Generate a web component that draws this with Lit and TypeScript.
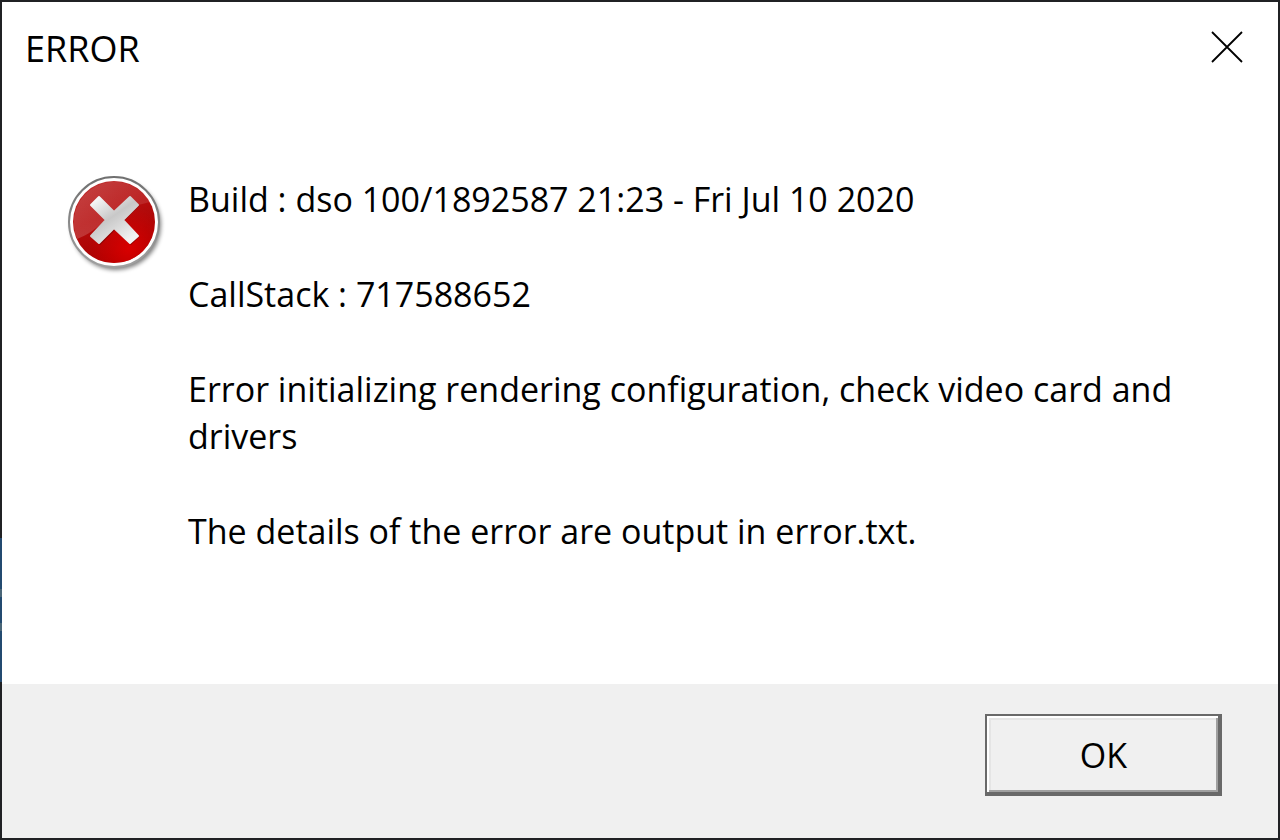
import { LitElement, html, css } from "lit";
import { customElement } from "lit/decorators.js";

@customElement("app-root")
class AppRoot extends LitElement {
  static styles = css`
    :host {
      display: block;
    }
    * {
      box-sizing: border-box;
    }
    .dialog {
      min-height: 100vh;
      display: flex;
      flex-direction: column;
      border-left: 2px solid #202124;
      border-image: linear-gradient(
          #202124 64%,
          #234a70 64%,
          #234a70 70%,
          #4a6678 70%,
          #4a6678 71%,
          #234a70 71%,
          #234a70 74%,
          #4a6678 74%,
          #4a6678 75%,
          #234a70 75%,
          #234a70 81%,
          #202124 81%
        )
        2;
      background: #fff;
      color: #000;
      font-family: "Open Sans", "Noto Sans", sans-serif;
      font-weight: 400;
      font-size: 34px;
    }
    .frame {
      flex: 1;
      display: flex;
      flex-direction: column;
      border: 2px solid #202124;
      border-left: 0;
    }
    .titlebar {
      display: flex;
      justify-content: space-between;
      align-items: center;
      padding: 21px 33px 0 23px;
    }
    .title {
      margin: 0;
      font-size: 36px;
      line-height: 52px;
      font-weight: inherit;
    }
    .close {
      border: 0;
      background: none;
      padding: 0;
      width: 36px;
      height: 36px;
      margin-bottom: 4px;
    }
    .close svg,
    .icon {
      display: block;
    }
    .body {
      flex: 1;
      display: flex;
      align-items: flex-start;
      gap: 20px;
      padding: 101px 64px 48px;
    }
    .icon {
      flex: none;
    }
    .message {
      flex: 1;
    }
    .line {
      margin: 0 0 48px;
      line-height: 47px;
    }
    .footer {
      display: flex;
      justify-content: flex-end;
      background: #f0f0f0;
      padding: 30px 56px 42px;
    }
    .ok {
      width: 237px;
      height: 82px;
      padding: 2px 0 0 2px;
      font: inherit;
      color: inherit;
      background: #f0f0f0;
      border: solid #696969;
      border-width: 2px 4px 4px 2px;
      border-radius: 0;
      box-shadow:
        inset 2px 2px #fff,
        inset -2px -2px #a0a0a0,
        inset 4px 4px #e5e5e5;
    }
  `;

  render() {
    return html`
      <div class="dialog" role="alertdialog" aria-labelledby="title" aria-describedby="message">
        <div class="frame">
          <header class="titlebar">
            <h1 class="title" id="title">ERROR</h1>
            <button class="close" aria-label="Close">
              <svg width="36" height="36" viewBox="0 0 36 36">
                <path d="M3 3L33 33M33 3L3 33" stroke="#000" stroke-width="1.8" fill="none" />
              </svg>
            </button>
          </header>
          <main class="body">
            <svg class="icon" width="102" height="102" viewBox="0 1 102 102" aria-hidden="true">
              <defs>
                <linearGradient id="red" x1="0" y1="0" x2="0.4" y2="1">
                  <stop offset="0" stop-color="#c23a3a" />
                  <stop offset="0.5" stop-color="#b50d0d" />
                  <stop offset="1" stop-color="#a80000" />
                </linearGradient>
                <radialGradient id="glow" cx="0.68" cy="0.82" r="0.5">
                  <stop offset="0" stop-color="#d80000" />
                  <stop offset="1" stop-color="#d80000" stop-opacity="0" />
                </radialGradient>
                <linearGradient id="gloss" x1="0" y1="0" x2="0" y2="1">
                  <stop offset="0" stop-color="#fff" stop-opacity="0.06" />
                  <stop offset="1" stop-color="#fff" stop-opacity="0.18" />
                </linearGradient>
                <linearGradient id="ring" x1="0" y1="0" x2="0" y2="1">
                  <stop offset="0" stop-color="#707070" />
                  <stop offset="1" stop-color="#a0a0a0" />
                </linearGradient>
                <linearGradient id="cross" x1="0" y1="0" x2="0.7" y2="1">
                  <stop offset="0" stop-color="#fff" />
                  <stop offset="0.5" stop-color="#c8c8c8" />
                  <stop offset="1" stop-color="#f2f2f2" />
                </linearGradient>
                <filter id="soft" x="-20%" y="-20%" width="140%" height="140%">
                  <feGaussianBlur stdDeviation="2" />
                </filter>
              </defs>
              <circle cx="50" cy="50" r="45" fill="#000" opacity="0.5" filter="url(#soft)" />
              <circle cx="48" cy="47" r="45" fill="#fff" stroke="url(#ring)" stroke-width="2" />
              <circle cx="48" cy="47" r="41" fill="url(#red)" />
              <circle cx="48" cy="47" r="41" fill="url(#glow)" />
              <path d="M11 64A41 41 0 0 1 84 27C62 32 51 37 39 46C30 53 22 60 11 64Z" fill="url(#gloss)" />
              <path
                d="M33 21L48 36L64 21L72 29L57 44L72 60L64 68L48 53L33 68L25 60L40 44L25 29Z"
                fill="#600000"
                opacity="0.5"
                transform="translate(1 2)"
              />
              <path
                d="M33 22L48 37L64 22L72 30L57 45L72 61L64 68L48 53L33 68L25 61L40 45L25 30Z"
                fill="url(#cross)"
                stroke="url(#cross)"
                stroke-width="2"
                stroke-linejoin="round"
              />
            </svg>
            <div class="message" id="message">
              <p class="line">Build : dso 100/1892587 21:23 - Fri Jul 10 2020</p>
              <p class="line">CallStack : 717588652</p>
              <p class="line">Error initializing rendering configuration, check video card and drivers</p>
              <p class="line">The details of the error are output in error.txt.</p>
            </div>
          </main>
          <footer class="footer"><button class="ok">OK</button></footer>
        </div>
      </div>
    `;
  }
}
